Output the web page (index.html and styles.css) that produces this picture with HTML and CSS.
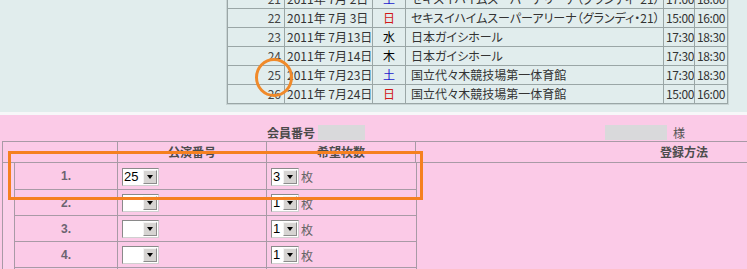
FILE: index.html
```html
<!DOCTYPE html>
<html lang="ja">
<head>
<meta charset="utf-8">
<title>公演申込</title>
<link rel="stylesheet" href="styles.css">
</head>
<body>
<div class="page">
  <section class="schedule">
    <table class="sched">
      <colgroup>
        <col class="w-no"><col class="w-date"><col class="w-dow"><col class="w-venue"><col class="w-time"><col class="w-time2">
      </colgroup>
      <tr><td class="no">21</td><td class="date">2011年 7月 2日</td><td class="dow sat">土</td><td class="venue">セキスイハイムスーパーアリーナ（グランディ・21）</td><td class="time">17:00</td><td class="time">18:00</td></tr>
      <tr><td class="no">22</td><td class="date">2011年 7月 3日</td><td class="dow sun">日</td><td class="venue">セキスイハイムスーパーアリーナ（グランディ・21）</td><td class="time">15:00</td><td class="time">16:00</td></tr>
      <tr><td class="no">23</td><td class="date">2011年 7月13日</td><td class="dow">水</td><td class="venue">日本ガイシホール</td><td class="time">17:30</td><td class="time">18:30</td></tr>
      <tr><td class="no">24</td><td class="date">2011年 7月14日</td><td class="dow">木</td><td class="venue">日本ガイシホール</td><td class="time">17:30</td><td class="time">18:30</td></tr>
      <tr><td class="no">25</td><td class="date">2011年 7月23日</td><td class="dow sat">土</td><td class="venue">国立代々木競技場第一体育館</td><td class="time">17:30</td><td class="time">18:30</td></tr>
      <tr><td class="no">26</td><td class="date">2011年 7月24日</td><td class="dow sun">日</td><td class="venue">国立代々木競技場第一体育館</td><td class="time">15:00</td><td class="time">16:00</td></tr>
    </table>
  </section>

  <section class="entry">
    <div class="member">
      <span class="label">会員番号</span><span class="redact r-id"></span>
      <span class="redact r-name"></span><span class="sama">様</span>
    </div>
    <table class="reg">
      <colgroup><col class="c-no"><col class="c-perf"><col class="c-qty"><col class="c-method"></colgroup>
      <tr class="head">
        <th></th><th>公演番号</th><th>希望枚数</th><th>登録方法</th>
      </tr>
      <tr>
        <td class="slots-cell" colspan="3">
          <table class="slots">
            <colgroup><col class="s-no"><col class="s-perf"><col class="s-qty"></colgroup>
            <tr><td class="idx">1.</td><td><span class="sel wide"><span class="v">25</span><span class="btn"><i></i></span></span></td><td><span class="sel narrow"><span class="v">3</span><span class="btn"><i></i></span></span><span class="unit">枚</span></td></tr>
            <tr><td class="idx">2.</td><td><span class="sel wide"><span class="v"></span><span class="btn"><i></i></span></span></td><td><span class="sel narrow"><span class="v">1</span><span class="btn"><i></i></span></span><span class="unit">枚</span></td></tr>
            <tr><td class="idx">3.</td><td><span class="sel wide"><span class="v"></span><span class="btn"><i></i></span></span></td><td><span class="sel narrow"><span class="v">1</span><span class="btn"><i></i></span></span><span class="unit">枚</span></td></tr>
            <tr><td class="idx">4.</td><td><span class="sel wide"><span class="v"></span><span class="btn"><i></i></span></span></td><td><span class="sel narrow"><span class="v">1</span><span class="btn"><i></i></span></span><span class="unit">枚</span></td></tr>
            <tr><td class="idx">5.</td><td><span class="sel wide"><span class="v"></span><span class="btn"><i></i></span></span></td><td><span class="sel narrow"><span class="v">1</span><span class="btn"><i></i></span></span><span class="unit">枚</span></td></tr>
          </table>
        </td>
        <td class="method"></td>
      </tr>
    </table>
  </section>

  <div class="mark-circle"></div>
  <div class="mark-rect"></div>
</div>
</body>
</html>
```

FILE: styles.css
```css
html, body {
  margin: 0;
  padding: 0;
  overflow: hidden;
}
body {
  font-family: "Noto Sans CJK JP", "Liberation Sans", sans-serif;
  font-size: 12px;
  font-feature-settings: "palt";
  color: #222;
}
.page {
  position: relative;
  width: 747px;
  height: 269px;
  overflow: hidden;
}

/* ---------- schedule (top) ---------- */
.schedule {
  height: 112px;
  background: #e1eded;
  overflow: hidden;
}
.sched {
  margin: -11px 0 0 227px;
  border-collapse: collapse;
  table-layout: fixed;
  width: 501px;
  border: 1px solid #9aa6a6;
  outline: 1px solid #c9d5d5;
}
.sched .w-no { width: 57px; }
.sched .w-date { width: 88px; }
.sched .w-dow { width: 33px; }
.sched .w-venue { width: 258px; }
.sched .w-time { width: 31px; }
.sched .w-time2 { width: 33px; }
.sched td {
  border: 1px solid #9aa6a6;
  height: 18px;
  padding: 0;
  line-height: 18px;
  white-space: nowrap;
  overflow: hidden;
  color: #333;
}
.sched .no { text-align: right; padding-right: 3px; color: #444; }
.sched .date { padding-left: 2px; }
.sched .dow { text-align: center; color: #000; }
.sched .dow.sat { color: #1a1acc; }
.sched .dow.sun { color: #d01818; }
.sched .venue { padding-left: 5px; }
.sched .time { padding-left: 2px; letter-spacing: -0.4px; }

/* ---------- entry (pink) ---------- */
.entry {
  border-top: 3px solid #f7f7f9;
  background: #fbcae7;
  height: 154px;
}
.member {
  height: 26px;
  box-sizing: border-box;
  padding: 8px 0 0 267px;
  display: flex;
  align-items: center;
}
.member .label {
  font-weight: bold;
  color: #4a4a4a;
  line-height: 15px;
  width: 51px;
}
.redact {
  display: block;
  height: 15px;
  background: #d9d9db;
}
.r-id { width: 47px; }
.r-name { width: 62px; margin-left: 240px; }
.sama { margin-left: 6px; color: #555; line-height: 15px; }

.reg {
  margin-left: 2px;
  border-collapse: collapse;
  table-layout: fixed;
  width: 950px;
}
.reg .c-no { width: 115px; }
.reg .c-perf { width: 149px; }
.reg .c-qty { width: 149px; }
.reg .c-method { width: 537px; }
.reg th {
  height: 20px;
  padding: 0;
  border: 1px solid #a89aa6;
  font-weight: bold;
  color: #4d4d4d;
  text-align: center;
  line-height: 20px;
}
.slots-cell {
  padding: 0 0 0 11px;
  border-left: 1px solid #a89aa6;
  vertical-align: top;
  background: #fbd0ea;
}
.method { padding: 0; }

.slots {
  border-collapse: collapse;
  table-layout: fixed;
  width: 402px;
  background: #fbcae7;
}
.slots .s-no { width: 103px; }
.slots .s-perf { width: 149px; }
.slots .s-qty { width: 150px; }
.slots td {
  height: 25px;
  padding: 0 0 0 4px;
  border: 1px solid #a89aa6;
  white-space: nowrap;
}
.slots tr:first-child td { border-top: 0; height: 26px; }
.slots .idx {
  padding: 0;
  text-align: center;
  font-weight: bold;
  color: #6b6470;
  font-family: "Liberation Sans", sans-serif;
  font-size: 12px;
}

.sel {
  display: inline-flex;
  vertical-align: middle;
  height: 18px;
  box-sizing: border-box;
  border: 1px solid #8a8a8a;
  border-right-color: #d0d0d0;
  border-bottom-color: #d0d0d0;
  background: #fff;
}
.sel.wide { width: 37px; }
.sel.narrow { width: 28px; }
.sel .v {
  flex: 1;
  font-family: "Liberation Sans", sans-serif;
  font-size: 13px;
  line-height: 16px;
  padding-left: 1px;
  color: #000;
}
.sel .btn {
  width: 14px;
  box-sizing: border-box;
  margin: 1px;
  background: #d6d4d2;
  border: 1px solid;
  border-color: #f4f4f4 #8c8c8c #8c8c8c #f4f4f4;
  display: flex;
  align-items: center;
  justify-content: center;
}
.sel .btn i {
  display: block;
  width: 0;
  height: 0;
  border-left: 3.5px solid transparent;
  border-right: 3.5px solid transparent;
  border-top: 4px solid #000;
}
.unit {
  vertical-align: middle;
  margin-left: 2px;
  color: #666;
}

/* ---------- annotation marks ---------- */
.mark-circle {
  position: absolute;
  left: 255px;
  top: 58px;
  width: 32px;
  height: 33px;
  border: 3px solid #f08a2a;
  border-radius: 50%;
}
.mark-rect {
  position: absolute;
  left: 8px;
  top: 151px;
  width: 409px;
  height: 43px;
  border: 3px solid #f5801f;
}
```
